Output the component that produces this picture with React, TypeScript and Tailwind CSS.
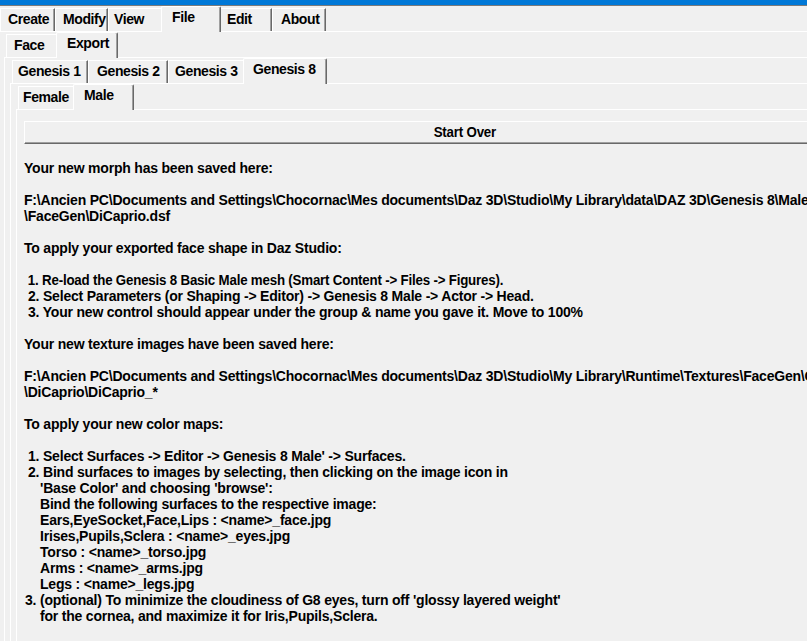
import type { ReactNode } from "react";

type Tab = { label: string; w: number; pad: number; selected?: boolean };

const row1: Tab[] = [
  { label: "Create", w: 55, pad: 7 },
  { label: "Modify", w: 53, pad: 7 },
  { label: "View", w: 55, pad: 5 },
  { label: "File", w: 56, pad: 8, selected: true },
  { label: "Edit", w: 53, pad: 7 },
  { label: "About", w: 54, pad: 8 },
];

const row2: Tab[] = [
  { label: "Face", w: 52, pad: 7 },
  { label: "Export", w: 58, pad: 8, selected: true },
];

const row3: Tab[] = [
  { label: "Genesis 1", w: 76, pad: 5 },
  { label: "Genesis 2", w: 80, pad: 8 },
  { label: "Genesis 3", w: 77, pad: 6 },
  { label: "Genesis 8", w: 80, pad: 7, selected: true },
];

const row4: Tab[] = [
  { label: "Female", w: 57, pad: 4 },
  { label: "Male", w: 57, pad: 8, selected: true },
];

function TabButton({ tab }: { tab: Tab }) {
  if (tab.selected) {
    return (
      <div
        className="relative z-10 -mx-[2px] h-[26px] shrink-0 whitespace-nowrap rounded-t-[2px] border-l border-t border-r border-l-white border-t-white border-r-[#696969] bg-[#f0f0f0] pt-[2px] leading-[16px] tracking-[-0.4px] shadow-[inset_-1px_0_0_#a0a0a0]"
        style={{ width: tab.w + 4, paddingLeft: tab.pad + 2 }}
      >
        {tab.label}
      </div>
    );
  }
  return (
    <div
      className="mt-[2px] h-[23px] shrink-0 whitespace-nowrap border-l border-t border-r border-l-white border-t-white border-r-[#696969] pt-[2px] leading-[16px] tracking-[-0.4px] shadow-[inset_-1px_0_0_#a0a0a0]"
      style={{ width: tab.w, paddingLeft: tab.pad }}
    >
      {tab.label}
    </div>
  );
}

function TabLevel({ tabs, children }: { tabs: Tab[]; children: ReactNode }) {
  return (
    <div>
      <div className="flex h-[25px] items-start pl-[2px]">
        {tabs.map((t) => (
          <TabButton key={t.label} tab={t} />
        ))}
      </div>
      <div className="border-l border-t border-white pl-[5px]">{children}</div>
    </div>
  );
}

function Line({ indent = 0, children }: { indent?: number; children?: ReactNode }) {
  return (
    <div className="h-[16px] whitespace-pre leading-[16px]" style={{ paddingLeft: indent }}>
      {children}
    </div>
  );
}

export default function App() {
  return (
    <div className="h-[641px] w-[807px] overflow-hidden bg-[#f0f0f0] font-['Liberation_Sans',Arial,sans-serif] text-[14px] font-bold tracking-[-0.2px] text-black">
      <div className="h-[5px] bg-[#0078d7]" />
      <div className="h-px bg-[#7a7a7a]" />
      <div className="-ml-[2px] w-[960px]">
        <TabLevel tabs={row1}>
          <TabLevel tabs={row2}>
            <TabLevel tabs={row3}>
              <TabLevel tabs={row4}>
                <div className="h-[540px] pl-[2px] pt-[11px]">
                  <div className="flex h-[23px] w-[882px] items-center justify-center border-b border-l border-r border-t border-b-[#696969] border-l-white border-r-[#696969] border-t-white pb-px shadow-[inset_-1px_-1px_0_#a0a0a0]">
                    <span className="inline-block scale-x-[0.95]">Start Over</span>
                  </div>

                  <div className="mt-[16px]">
                    <Line>Your new morph has been saved here:</Line>
                    <Line />
                    <Line>
                      F:\Ancien PC\Documents and Settings\Chocornac\Mes documents\Daz 3D\Studio\My Library\data\DAZ 3D\Genesis 8\Male
                    </Line>
                    <Line>\FaceGen\DiCaprio.dsf</Line>
                    <Line />
                    <Line>To apply your exported face shape in Daz Studio:</Line>
                    <Line />
                    <div className="h-[16px] origin-left scale-x-[0.95] whitespace-pre pl-[4px] leading-[16px]">
                      1. Re-load the Genesis 8 Basic Male mesh (Smart Content -&gt; Files -&gt; Figures).
                    </div>
                    <Line indent={4}>2. Select Parameters (or Shaping -&gt; Editor) -&gt; Genesis 8 Male -&gt; Actor -&gt; Head.</Line>
                    <Line indent={4}>3. Your new control should appear under the group &amp; name you gave it. Move to 100%</Line>
                    <Line />
                    <Line>Your new texture images have been saved here:</Line>
                    <Line />
                    <Line>
                      F:\Ancien PC\Documents and Settings\Chocornac\Mes documents\Daz 3D\Studio\My Library\Runtime\Textures\FaceGen\Genesis 8\Male
                    </Line>
                    <Line>\DiCaprio\DiCaprio_*</Line>
                    <Line />
                    <Line>To apply your new color maps:</Line>
                    <Line />
                    <Line indent={4}>1. Select Surfaces -&gt; Editor -&gt; Genesis 8 Male' -&gt; Surfaces.</Line>
                    <Line indent={4}>2. Bind surfaces to images by selecting, then clicking on the image icon in</Line>
                    <Line indent={16}>'Base Color' and choosing 'browse':</Line>
                    <Line indent={16}>Bind the following surfaces to the respective image:</Line>
                    <Line indent={16}>Ears,EyeSocket,Face,Lips : &lt;name&gt;_face.jpg</Line>
                    <Line indent={16}>Irises,Pupils,Sclera : &lt;name&gt;_eyes.jpg</Line>
                    <Line indent={16}>Torso : &lt;name&gt;_torso.jpg</Line>
                    <Line indent={16}>Arms : &lt;name&gt;_arms.jpg</Line>
                    <Line indent={16}>Legs : &lt;name&gt;_legs.jpg</Line>
                    <Line indent={1}>3. (optional) To minimize the cloudiness of G8 eyes, turn off 'glossy layered weight'</Line>
                    <Line indent={16}>for the cornea, and maximize it for Iris,Pupils,Sclera.</Line>
                  </div>
                </div>
              </TabLevel>
            </TabLevel>
          </TabLevel>
        </TabLevel>
      </div>
    </div>
  );
}
